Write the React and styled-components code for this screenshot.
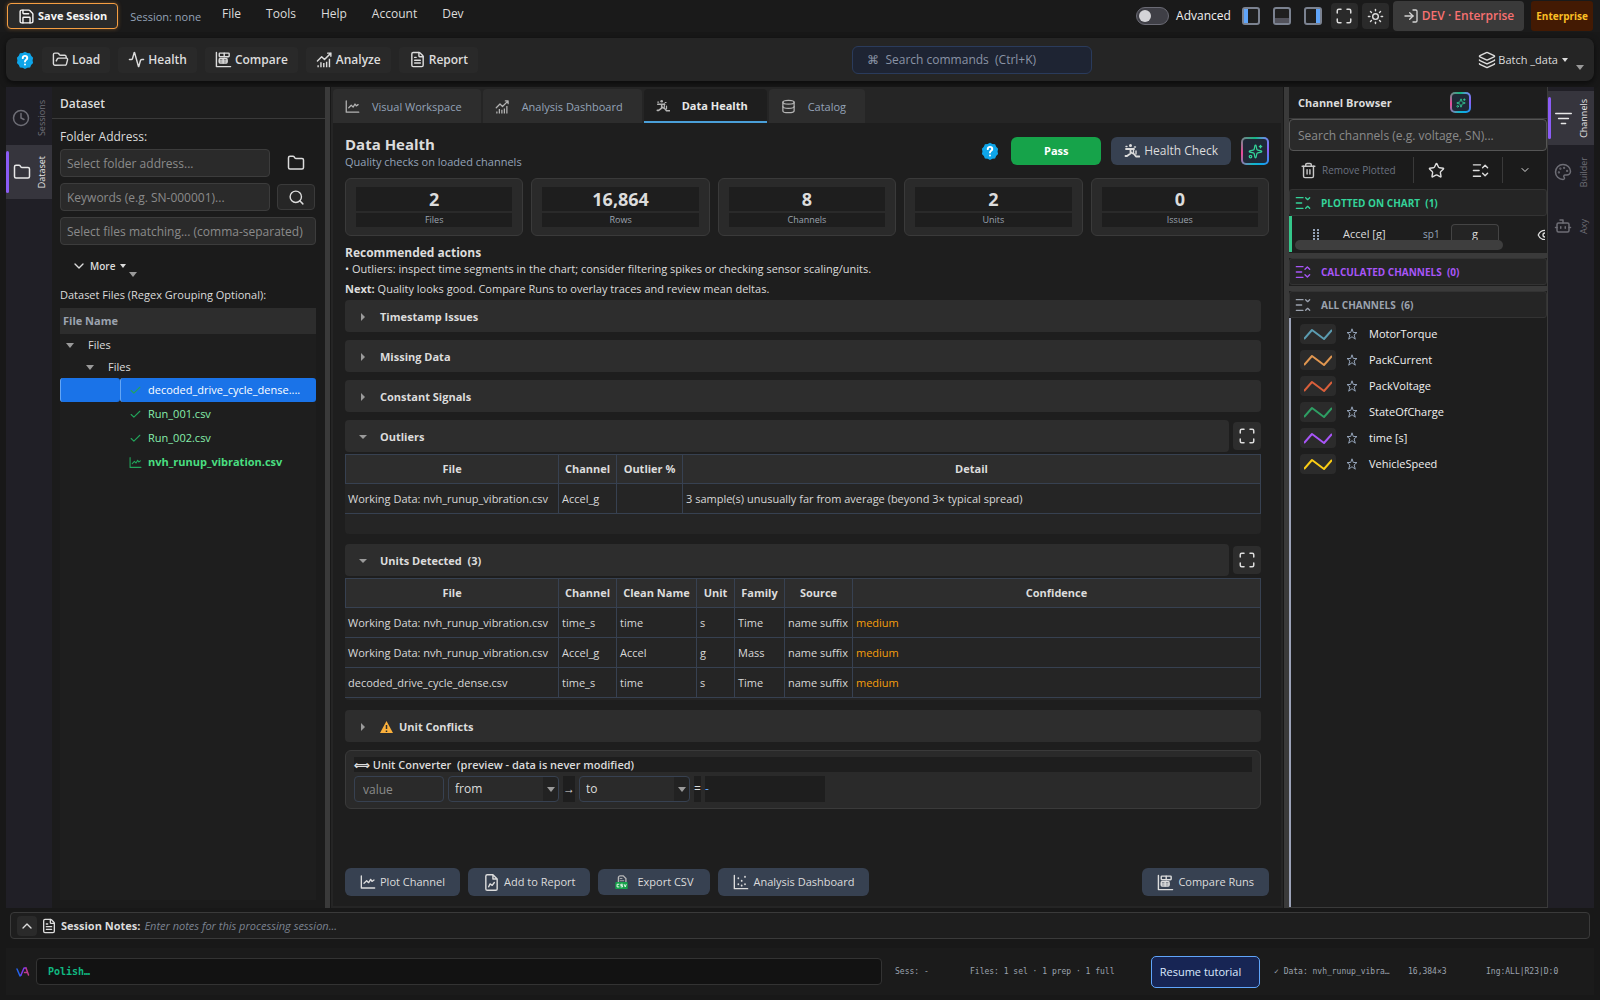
import { useState } from 'react'
import styled, { createGlobalStyle, css } from 'styled-components'
import {
  Activity, Bot, ChevronDown, ChevronUp, Check, Clock, Database, FileText, Folder, FolderOpen,
  Layers, LogIn, Maximize, Palette, Save, Search, Sparkles, Star, Sun, Trash2, Eye,
} from 'lucide-react'

const GlobalStyle = createGlobalStyle`
  * {
    box-sizing: border-box;
  }
  body {
    margin: 0;
    background: #181818;
    color: #dcdcdc;
    font-family: "Open Sans", "Noto Sans", sans-serif;
    font-size: 12px;
    line-height: 16px;
  }
  button, input, select {
    font: inherit;
    color: inherit;
    margin: 0;
  }
  button {
    border: 0;
    padding: 0;
    background: none;
    white-space: nowrap;
  }
  svg {
    flex: none;
    display: block;
  }
`

const Page = styled.div`
  min-height: 100vh;
  display: flex;
  flex-direction: column;
`

/* ---- top menu ---- */

const TopBar = styled.header`
  display: flex;
  align-items: center;
  height: 32px;
  padding: 0 7px;
  background: #1a1a1a;
`
const SaveButton = styled.button`
  display: flex;
  align-items: center;
  gap: 3px;
  height: 26px;
  padding: 0 10px;
  border: 1px solid #f59e42;
  border-radius: 4px;
  background: #2a2a2a;
  color: #f5f5f5;
  font-size: 11px;
  font-weight: 700;
  box-shadow: 0 0 4px rgba(245, 158, 66, 0.35);
`
const SessionLabel = styled.span`
  margin: 2px 21px 0 12px;
  color: #94a3b8;
  font-size: 11px;
`
const Menu = styled.nav`
  display: flex;
  gap: 25px;
  flex: 1;
  padding-bottom: 4px;
`
const TopRight = styled.div`
  display: flex;
  align-items: center;
`
const ToggleLabel = styled.label`
  display: flex;
  align-items: center;
  gap: 7px;
  margin-right: 11px;
  color: #f0f0f0;
`
const Toggle = styled.input`
  appearance: none;
  width: 33px;
  height: 18px;
  padding: 2px;
  border: 1px solid #6b6b75;
  border-radius: 9px;
  background: #3f3f46;
  &::before {
    content: "";
    display: block;
    width: 12px;
    height: 12px;
    border-radius: 50%;
    background: #d4d4d8;
  }
  &:checked::before {
    margin-left: 15px;
  }
`
const LayoutButtons = styled.div`
  display: flex;
  gap: 13px;
  margin-right: 9px;
`
const SquareButton = styled.button`
  display: grid;
  place-items: center;
  width: 27px;
  height: 26px;
  margin-right: 4px;
  border-radius: 4px;
  background: #2a2a2a;
`
const PlanButton = styled.button`
  display: flex;
  align-items: center;
  gap: 3px;
  height: 30px;
  margin-right: 7px;
  padding: 0 10px;
  border-radius: 4px;
  background: #3a3a3a;
  font-weight: 600;
  color: #f87171;
  svg {
    color: #d4d4d4;
  }
`
const PlanBadge = styled.span`
  padding: 7px 5px;
  border-radius: 3px;
  background: #431a03;
  color: #fbbf24;
  font-size: 10px;
  font-weight: 700;
`

/* ---- toolbar ---- */

const Toolbar = styled.div`
  display: flex;
  align-items: center;
  justify-content: space-between;
  height: 43px;
  margin: 6px;
  padding: 0 10px;
  border-radius: 8px;
  background: #252525;
  box-shadow: 0 2px 6px rgba(0, 0, 0, 0.6);
`
const ToolGroup = styled.div`
  display: flex;
  align-items: center;
  gap: 8px;
`
const ToolButton = styled.button`
  display: flex;
  align-items: center;
  gap: 3px;
  height: 26px;
  padding: 0 10px;
  border-radius: 4px;
  background: #292929;
  font-weight: 600;
`
const CommandBox = styled.input`
  width: 240px;
  height: 28px;
  margin-right: 12px;
  padding: 0 14px;
  border: 1px solid #2a3b5c;
  border-radius: 6px;
  background: #1e2433;
  &::placeholder {
    color: #8a93a5;
    opacity: 1;
  }
`
const BatchButton = styled.button`
  display: flex;
  align-items: center;
  gap: 2px;
  font-size: 11px;
`
const Caret = styled.span`
  width: 0;
  height: 0;
  border: 4px solid transparent;
  border-bottom: 0;
  border-top: 5px solid #9a9a9a;
`
const SmallCaret = styled(Caret)`
  border-width: 3px;
  border-bottom: 0;
  border-top: 4px solid #dcdcdc;
  margin-left: 2px;
`
const LowCaret = styled(Caret)`
  margin-top: 16px;
`

/* ---- workspace ---- */

const Workspace = styled.div`
  display: flex;
  flex: 1;
  margin: 0 6px;
`
const Rail = styled.nav`
  display: flex;
  flex-direction: column;
  width: 46px;
  flex: none;
  background: #201f26;
  padding-top: 4px;
`
const RailButton = styled.button`
  display: flex;
  align-items: center;
  justify-content: space-between;
  height: 54px;
  padding: 0 2px 0 6px;
  color: ${(props) => (props.$active ? '#e8e8e8' : '#6e6e76')};
  ${(props) => props.$active && css`
    padding-left: 3px;
    background: #36353d;
    &::before {
      content: "";
      width: 3px;
      height: 42px;
      margin-left: -3px;
      border-radius: 2px;
      background: #8b5cf6;
    }
  `}
  span {
    writing-mode: vertical-rl;
    transform: rotate(180deg);
    font-size: 9px;
  }
`
const Splitter = styled.div`
  width: 5px;
  flex: none;
  background: #3a3a3a;
`

/* ---- dataset panel ---- */

const DatasetPanel = styled.aside`
  display: flex;
  flex-direction: column;
  width: 273px;
  flex: none;
  background: #1b1b1b;
`
const PanelTitle = styled.h2`
  display: flex;
  align-items: center;
  height: 32px;
  margin: 0;
  padding: 2px 8px 0;
  border-bottom: 1px solid #3a3a3a;
  background: #1e1e1e;
  font-size: 12px;
  font-weight: 600;
`
const DatasetBody = styled.div`
  display: flex;
  flex-direction: column;
  flex: 1;
  padding: 10px 9px 8px 8px;
`
const FieldRow = styled.div`
  display: grid;
  grid-template-columns: 210px 38px;
  align-items: center;
  column-gap: 7px;
  margin-bottom: 6px;
`
const FieldLabel = styled.label`
  margin-bottom: 4px;
  font-size: ${(props) => (props.$small ? '11px' : '12px')};
`
const TextField = styled.input`
  width: 100%;
  height: 28px;
  padding: 0 6px;
  border: 1px solid #3c3c3c;
  border-radius: 4px;
  background: #2a2a2a;
  &::placeholder {
    color: #8a8a8a;
    opacity: 1;
  }
`
const FieldButton = styled.button`
  display: grid;
  place-items: center;
  height: 26px;
  border-radius: 4px;
  border: 1px solid ${(props) => (props.$plain ? 'transparent' : '#3a3a3a')};
  background: ${(props) => (props.$plain ? 'none' : '#262626')};
`
const MoreButton = styled.button`
  display: flex;
  align-items: center;
  align-self: flex-start;
  gap: 3px;
  height: 26px;
  margin: 8px 0 8px 11px;
  font-size: 10px;
  font-weight: 600;
`
const TreeHeader = styled.div`
  height: 26px;
  margin-top: 1px;
  padding: 5px 3px;
  background: #2d2d2d;
  color: #9ca3af;
  font-size: 11px;
  font-weight: 700;
`
const Tree = styled.div`
  flex: 1;
  background: #1e1e1e;
  font-size: 11px;
`
const FolderRow = styled.button`
  display: flex;
  align-items: center;
  gap: 14px;
  height: 22px;
  padding-left: ${(props) => (props.$depth ? '26px' : '6px')};
`
const FileRow = styled.button`
  display: flex;
  align-items: stretch;
  width: 100%;
  height: 24px;
  color: ${(props) => (props.$plotted ? '#4ade80' : '#86efac')};
  font-weight: ${(props) => (props.$plotted ? 700 : 400)};
  text-align: left;
  svg {
    color: #22a55b;
  }
  span {
    border-left: 1px solid transparent;
    border-radius: 3px;
  }
  ${(props) => props.$selected && css`
    color: #fff;
    span {
      border-left-color: #63a5f5;
      background: #1a73e8;
    }
  `}
`
const Indent = styled.span`
  width: 60px;
`
const FileName = styled.span`
  display: flex;
  align-items: center;
  gap: 6px;
  flex: 1;
  padding-left: 8px;
`

/* ---- center ---- */

const Center = styled.main`
  display: flex;
  flex-direction: column;
  flex: 1;
  min-width: 0;
  margin: 0 1px;
  background: #252525;
`
const TabBar = styled.div`
  display: flex;
  gap: 2px;
  height: 36px;
  padding: 2px 2px 0;
`
const Tab = styled.button`
  display: flex;
  align-items: center;
  gap: 12px;
  padding: 1px 19px 0 12px;
  border-radius: 4px 4px 0 0;
  background: #2d2d2d;
  color: #94a3b8;
  font-size: 11px;
  svg {
    color: #b4b4b4;
  }
  ${(props) => props.$active && css`
    border-bottom: 2px solid #4a9fd8;
    background: #1e1e1e;
    color: #e8e8e8;
    font-weight: 700;
  `}
`
const Content = styled.div`
  display: flex;
  flex-direction: column;
  flex: 1;
  margin: 0 2px;
  padding: 10px 12px;
  border-bottom: 2px solid #252525;
  background: #1e1e1e;
`
const HealthHeader = styled.div`
  display: flex;
  align-items: center;
  gap: 10px;
  margin-bottom: 9px;
`
const Heading = styled.div`
  flex: 1;
  h1 {
    margin: 0;
    font-size: 15px;
    line-height: 22px;
  }
  p {
    margin: 0;
    font-size: 11px;
    line-height: 14px;
    color: #94a3b8;
  }
`
const ActionButton = styled.button`
  display: flex;
  align-items: center;
  gap: 4px;
  height: 28px;
  padding: 0 15px;
  border-radius: 6px;
  background: #374151;
  color: #dcdcdc;
  font-size: 11px;
`
const CheckButton = styled(ActionButton)`
  padding: 0 13px;
  font-size: 12px;
`
const PassButton = styled(ActionButton)`
  justify-content: center;
  width: 90px;
  margin-left: 2px;
  background: #16a34a;
  color: #fff;
  font-weight: 700;
`
const AiButton = styled.button`
  display: grid;
  place-items: center;
  width: ${(props) => (props.$small ? '21px' : '28px')};
  height: ${(props) => (props.$small ? '21px' : '28px')};
  border: 2px solid transparent;
  border-radius: 5px;
  background:
    linear-gradient(#1f2937, #1f2937) padding-box,
    conic-gradient(from 0deg, #10b981, #6b8ae8 40deg, #8b5cf6 90deg, #0ea5e9 150deg, #14b8c6 190deg, #ec4899 260deg, #10b981) border-box;
  color: #34d399;
`
const Cards = styled.div`
  display: grid;
  grid-template-columns: repeat(5, 1fr);
  gap: 8px;
`
const Card = styled.div`
  display: grid;
  gap: 2px;
  padding: 8px 10px;
  border: 1px solid #3a3a3a;
  border-radius: 6px;
  background: #2a2a2a;
  text-align: center;
  strong {
    background: #1e1e1e;
    font-size: 18px;
    line-height: 24px;
  }
  span {
    background: #1e1e1e;
    color: #9ca3af;
    font-size: 9px;
    line-height: 14px;
  }
`
const Advice = styled.div`
  margin: 9px 0 3px;
  font-size: 11px;
  p {
    margin: 0;
  }
  p:first-child {
    font-size: 12px;
  }
  p:last-child {
    margin-top: 4px;
  }
`
const Sections = styled.div`
  display: flex;
  flex-direction: column;
  gap: 8px;
  margin-right: 8px;
`
const SectionHead = styled.div`
  display: flex;
  align-items: center;
  gap: 4px;
`
const SectionToggle = styled.button`
  display: flex;
  align-items: center;
  flex: 1;
  height: 32px;
  padding: 1px 0 0 14px;
  border-radius: 4px;
  background: #2d2d2d;
  font-size: 11px;
  font-weight: 700;
  white-space: pre;
  svg {
    margin-right: 6px;
  }
`
const Disclosure = styled.span`
  width: 21px;
  &::before {
    content: "";
    display: block;
    width: 0;
    height: 0;
    border: 4px solid transparent;
    ${(props) => (props.$open
      ? 'border-top: 4px solid #9a9a9a; border-bottom: 0;'
      : 'border-left: 4px solid #9a9a9a; border-right: 0; margin-left: 2px;')}
  }
`
const ExpandButton = styled(SquareButton)`
  width: 28px;
  height: 28px;
  margin: 0;
  background: #2d2d2d;
`
const TableBox = styled.div`
  margin: 2px 0;
  padding-bottom: ${(props) => (props.$roomy ? '20px' : '2px')};
  border-radius: 0 0 4px 4px;
  background: #252525;
`
const Table = styled.table`
  width: 100%;
  table-layout: fixed;
  border-collapse: collapse;
  font-size: 11px;
  th, td {
    height: 30px;
    padding: 0 3px;
    border: 1px solid #374151;
    white-space: nowrap;
  }
  th {
    height: 29px;
    background: #2d2d2d;
    font-weight: 700;
  }
  td {
    color: #d8d8d8;
  }
  td:first-child {
    padding-left: 2px;
    border-left-color: #252525;
  }
`
const Medium = styled.td`
  && {
    color: #f59e0b;
  }
`
const Converter = styled.section`
  padding: 6px 8px;
  border: 1px solid #3a3a3a;
  border-radius: 6px;
  background: #2a2a2a;
  h3 {
    margin: 0 0 4px;
    background: #1e1e1e;
    font-size: 11px;
    font-weight: 600;
    line-height: 15px;
  }
`
const ConverterRow = styled.div`
  display: flex;
  gap: 4px;
`
const ValueInput = styled(TextField)`
  width: 90px;
  height: 26px;
  padding: 0 8px;
  border-color: #374151;
`
const SelectWrap = styled.div`
  display: grid;
  width: 111px;
  align-items: center;
  > * {
    grid-area: 1 / 1;
  }
  ${Caret} {
    justify-self: end;
    margin-right: 4px;
    pointer-events: none;
  }
`
const Select = styled.select`
  appearance: none;
  width: 100%;
  height: 26px;
  padding: 0 6px;
  border: 1px solid #374151;
  border-radius: 4px;
  background: linear-gradient(90deg, transparent 94px, #222 94px);
`
const Sign = styled.span`
  padding: 5px 0;
  background: #1e1e1e;
  width: ${(props) => (props.$wide ? '120px' : 'auto')};
  color: ${(props) => (props.$wide ? '#60a5fa' : 'inherit')};
`
const Footer = styled.div`
  display: flex;
  align-items: center;
  gap: 8px;
  margin-top: auto;
  ${ActionButton}:last-child {
    margin-left: auto;
  }
`
const ExportButton = styled(ActionButton)`
  gap: 9px;
  height: 26px;
  padding: 0 17px;
`

/* ---- channel browser ---- */

const ChannelPanel = styled.aside`
  display: flex;
  flex-direction: column;
  width: 259px;
  flex: none;
  border-right: 1px solid #3a3a3a;
  border-bottom: 1px solid #3a3a3a;
  background: #1e1e1e;
`
const ChannelTitle = styled(PanelTitle)`
  justify-content: space-between;
  padding: 0 76px 0 9px;
  font-size: 11px;
  font-weight: 700;
`
const ChannelSearch = styled(TextField)`
  height: 32px;
  padding: 0 8px;
  border-color: #555;
`
const ChannelTools = styled.div`
  display: flex;
  align-items: center;
  height: 38px;
  padding-left: 11px;
  background: #1b1b1b;
`
const RemoveButton = styled.button`
  display: flex;
  align-items: center;
  gap: 5px;
  width: 113px;
  color: #6b7280;
  font-size: 10px;
  svg {
    color: #c8c8c8;
  }
`
const Divider = styled.span`
  width: 1px;
  height: 26px;
  background: #3a3a3a;
`
const ToolIcon = styled.button`
  display: grid;
  place-items: center;
  flex: 1;
`
const GroupHead = styled.button`
  display: flex;
  align-items: center;
  gap: 10px;
  height: 27px;
  padding-left: 5px;
  border: 1px solid #333;
  border-radius: 3px;
  background: #252525;
  color: ${(props) => props.$color};
  font-size: 10px;
  font-weight: 700;
  white-space: pre;
`
const PlottedArea = styled.div`
  height: 36px;
  padding-left: 3px;
  border-left: 3px solid #34c78a;
`
const PlottedRow = styled.div`
  display: flex;
  align-items: flex-end;
  height: 24px;
  padding-left: 18px;
  margin-right: 2px;
  overflow: hidden;
  line-height: 12px;
  > * {
    flex: none;
  }
  svg:last-child {
    margin-bottom: -3px;
  }
`
const PlottedName = styled.span`
  width: 80px;
  margin-left: 23px;
  font-size: 11px;
`
const PlottedSlot = styled.span`
  width: 28px;
  color: #94a3b8;
  font-size: 10px;
`
const UnitButton = styled.button`
  width: 48px;
  margin-right: 38px;
  padding-top: 3px;
  border: 1px solid #444;
  border-bottom: 0;
  border-radius: 4px 4px 0 0;
  background: #242424;
  font-size: 11px;
`
const ScrollThumb = styled.div`
  width: 208px;
  height: 10px;
  border-radius: 5px;
  background: #3e3e3e;
`
const Bar = styled.div`
  height: 5px;
  margin-top: 1px;
  background: #3a3a3a;
`
const ChannelList = styled.ul`
  flex: 1;
  margin: 0;
  padding: 3px 0 0 9px;
  border-left: 2px solid #9ca3b8;
  list-style: none;
`
const ChannelRow = styled.li`
  display: flex;
  align-items: center;
  height: 26px;
  color: #f0f0f0;
  font-size: 11px;
`
const Swatch = styled.button`
  display: grid;
  place-items: center;
  width: 36px;
  height: 20px;
  margin-right: 10px;
  border-radius: 4px;
  background: #2b2b2b;
  color: ${(props) => props.$color};
`
const StarButton = styled.button`
  margin-right: 11px;
  color: #94a3b8;
`

/* ---- bottom ---- */

const Notes = styled.div`
  display: flex;
  align-items: center;
  height: 27px;
  margin: 4px 10px 9px;
  padding: 0 6px;
  border: 1px solid #3a3a3a;
  border-radius: 4px;
  background: #1e1e1e;
`
const NotesToggle = styled(SquareButton)`
  width: 20px;
  height: 20px;
  margin-right: 4px;
`
const NotesLabel = styled.label`
  display: flex;
  align-items: center;
  gap: 4px;
  font-size: 11px;
  font-weight: 700;
`
const NotesInput = styled.input`
  flex: 1;
  margin-left: 4px;
  padding: 0;
  border: 0;
  background: none;
  font-size: 11px;
  font-style: italic;
  &::placeholder {
    color: #7b8290;
    opacity: 1;
  }
`
const StatusBar = styled.footer`
  display: flex;
  align-items: center;
  height: 47px;
  margin: 0 6px 5px;
  padding: 0 32px 0 10px;
  background: #1b1b1b;
  color: #9ca3af;
  font-family: "DejaVu Sans Mono", monospace;
  font-size: 8px;
`
const Console = styled.input`
  flex: 1;
  height: 27px;
  margin: 0 13px 0 6px;
  padding: 0 11px;
  border: 1px solid #333;
  border-radius: 4px;
  background: #121212;
  color: #10b981;
  font-size: 10px;
  font-weight: 700;
`
const StatusItem = styled.span`
  width: ${(props) => props.$width};
  flex: none;
  white-space: pre;
`
const ResumeButton = styled.button`
  width: 109px;
  height: 32px;
  margin-right: 14px;
  padding-right: 10px;
  border: 1px solid #60a5fa;
  border-radius: 5px;
  background: #172554;
  color: #dbeafe;
  font-family: "Open Sans", "Noto Sans", sans-serif;
  font-size: 11px;
`

/* ---- icons ---- */

const Icon = ({ size = 16, children, ...rest }) => (
  <svg width={size} height={size} viewBox="0 0 24 24" fill="none" stroke="currentColor" strokeWidth="2" strokeLinecap="round" strokeLinejoin="round" aria-hidden="true" {...rest}>
    {children}
  </svg>
)

const HelpIcon = () => (
  <Icon size={18} stroke="none">
    <path fill="#0ea5e9" d="M12 1l3.2 1.8 3.6.3 1.5 3.3 2.5 2.6-.7 3.6.7 3.5-2.6 2.5-1.4 3.4-3.6.3L12 24l-3.2-1.7-3.6-.3-1.4-3.4L1.200 16l.7-3.500L1.200 9l2.500-2.600 1.500-3.300 3.600-.3z" />
    <path stroke="#fff" strokeWidth="2.600" d="M9 9.500a3 3 0 0 1 6 0c0 2-3 2.300-3 4.500M12 17.800v.2" />
  </Icon>
)
const LineChartIcon = ({ size = 16 }) => (
  <Icon size={size}>
    <path d="M2 3v18h20" />
    <path d="M6 14l4-4 3 3 3-5 2 3 3-2" />
  </Icon>
)
const BarsTrendIcon = ({ size = 17 }) => (
  <Icon size={size}>
    <path d="M2 14l6-6 4 4 9-9M16.500 3H21v4.500" />
    <path d="M3 20v3M7 16v7M11 17v6M15 15v8M19 11v12" strokeWidth="2" strokeLinecap="butt" />
  </Icon>
)
const CompareIcon = () => (
  <Icon size={17}>
    <path d="M2 2v20h20" />
    <rect x="6" y="3" width="14" height="5" rx="1" />
    <path d="M13 3v5" />
    <rect x="6" y="11" width="11" height="6" rx="1" />
    <path d="M11.500 11v6M6 14h11" />
  </Icon>
)
const RunnerIcon = ({ size = 16 }) => (
  <svg width={size} height={size} viewBox="0 0 16 16" fill="none" stroke="currentColor" strokeLinecap="round" strokeLinejoin="round" aria-hidden="true">
    <circle cx="6.500" cy="2.500" r="1.500" fill="currentColor" stroke="none" />
    <path d="M2 6h8M6.500 6v4.500L3 13H1.500" strokeWidth="1.800" />
    <path d="M7 9.500l3 1.500 2 2.500h3.500" strokeWidth="1.800" />
    <path d="M9.500 5.500v4M12 8v3M2 3.500h1M10.500 4h1" strokeWidth="1.400" />
  </svg>
)
const ScatterIcon = () => (
  <Icon>
    <path d="M2 2v20h20" />
    <path d="M8 6v.5M13 10v.5M8 15v.5M18 4v.5M18 15v.5M13 17v.5" strokeWidth="2.600" />
  </Icon>
)
const ReportChartIcon = () => (
  <Icon size={17}>
    <path d="M14 1H6a2 2 0 0 0-2 2v18a2 2 0 0 0 2 2h12a2 2 0 0 0 2-2V7zM14 1v6h6" />
    <path d="M8 18l2-4 3 2 3-4" />
  </Icon>
)
const CsvIcon = () => (
  <svg width="13" height="15" viewBox="0 0 14 17" aria-hidden="true">
    <path d="M3.500 9V3a2 2 0 0 1 2-2H9l3 3v5" fill="none" stroke="#b8b8b8" strokeWidth="1.500" />
    <path d="M5 4h3M5 6.500h5" stroke="#b8b8b8" />
    <rect y="8" width="14" height="8" rx="1" fill="#16a34a" />
    <path d="M4.500 10.500H2v3h2.500M8.500 10.500H6.200v1.500h2v1.500H6M10 10.500l1.200 3 1.200-3" fill="none" stroke="#fff" />
  </svg>
)
const ListIcon = ({ size = 17, open }) => (
  <Icon size={size}>
    <path d="M2 4h10M2 12h8M2 20h10" />
    {open ? <path d="M16 4l3 3 3-3M16 20l3-3 3 3" /> : <path d="M15 8l3.500-3.500L22 8M15 16l3.500 3.500L22 16" />}
  </Icon>
)
const FilterLinesIcon = () => (
  <Icon size={17}>
    <path d="M1 5h22M5 12h14M9 19h6" />
  </Icon>
)
const GripIcon = () => (
  <svg width="7" height="11" viewBox="0 0 7 11" fill="#94a3b8" aria-hidden="true">
    {[0, 3, 6, 9].map((y) => (
      <g key={y}>
        <rect x="0" y={y} width="2" height="2" />
        <rect x="4" y={y} width="2" height="2" />
      </g>
    ))}
  </svg>
)
const WaveIcon = () => (
  <svg width="28" height="12" viewBox="0 0 28 12" fill="none" stroke="currentColor" strokeWidth="2" strokeLinejoin="round" aria-hidden="true">
    <path d="M0 11l8-9 12 9 8-9" />
  </svg>
)
const SmallStar = () => (
  <svg width="12" height="12" viewBox="0 0 12 12" fill="none" stroke="currentColor" aria-hidden="true">
    <path d="M6 .8l1.300 3.700H11L8.100 6.900l1.200 4.300L6 8.700l-3.300 2.500 1.200-4.300L1 4.500h3.700z" />
  </svg>
)
const LogoIcon = () => (
  <svg width="14" height="12" viewBox="0 0 14 12" fill="none" strokeWidth="1.500" strokeLinecap="round" strokeLinejoin="round" aria-hidden="true">
    <path d="M1 3l3 7 1-1" stroke="#2563eb" />
    <path d="M5 9l3-7h2" stroke="#7c3aed" />
    <path d="M10 2l2.500 7M8.500 6.500h3" stroke="#c0398f" />
  </svg>
)
const WarningIcon = () => (
  <svg width="13" height="12" viewBox="0 0 13 12" aria-hidden="true">
    <path d="M6.500 0L13 12H0z" fill="#fbb03b" />
    <path d="M6.500 4v4M6.500 9.500V11" stroke="#2d2d2d" strokeWidth="1.500" />
  </svg>
)
const PaneIcon = ({ side }) => (
  <svg width="18" height="18" viewBox="0 0 18 18" aria-hidden="true">
    <rect x="1" y="1" width="16" height="16" rx="2" fill="#1f1f1f" stroke="#7b8290" strokeWidth="2" />
    {side === 'left' && <rect x="2" y="2" width="4" height="14" fill="#60a5fa" />}
    {side === 'right' && <rect x="12" y="2" width="4" height="14" fill="#60a5fa" />}
    {side === 'bottom' && <rect x="2" y="11" width="14" height="5" fill="#52525b" />}
  </svg>
)

/* ---- data ---- */

const menus = ['File', 'Tools', 'Help', 'Account', 'Dev']

const tools = [
  { label: 'Load', icon: <FolderOpen size={17} /> },
  { label: 'Health', icon: <Activity size={17} /> },
  { label: 'Compare', icon: <CompareIcon /> },
  { label: 'Analyze', icon: <BarsTrendIcon /> },
  { label: 'Report', icon: <FileText size={17} /> },
]

const tabs = [
  { label: 'Visual Workspace', icon: <LineChartIcon size={15} /> },
  { label: 'Analysis Dashboard', icon: <BarsTrendIcon size={15} /> },
  { label: 'Data Health', icon: <RunnerIcon size={14} /> },
  { label: 'Catalog', icon: <Database size={15} /> },
]

const stats = [
  ['2', 'Files'],
  ['16,864', 'Rows'],
  ['8', 'Channels'],
  ['2', 'Units'],
  ['0', 'Issues'],
]

const files = [
  { name: 'decoded_drive_cycle_dense....' },
  { name: 'Run_001.csv' },
  { name: 'Run_002.csv' },
  { name: 'nvh_runup_vibration.csv', plotted: true },
]

const units = [
  ['Working Data: nvh_runup_vibration.csv', 'time_s', 'time', 's', 'Time', 'name suffix'],
  ['Working Data: nvh_runup_vibration.csv', 'Accel_g', 'Accel', 'g', 'Mass', 'name suffix'],
  ['decoded_drive_cycle_dense.csv', 'time_s', 'time', 's', 'Time', 'name suffix'],
]

const channels = [
  { name: 'MotorTorque', color: '#5b9bb0' },
  { name: 'PackCurrent', color: '#e09650' },
  { name: 'PackVoltage', color: '#d95f3b' },
  { name: 'StateOfCharge', color: '#2e9e63' },
  { name: 'time [s]', color: '#a855f7' },
  { name: 'VehicleSpeed', color: '#facc15' },
]

const Section = ({ title, open, icon, expandable, children }) => (
  <section>
    <SectionHead>
      <SectionToggle aria-expanded={!!open}>
        <Disclosure $open={open} />
        {icon}
        {title}
      </SectionToggle>
      {expandable && (
        <ExpandButton aria-label={`Expand ${title}`}>
          <Maximize size={18} />
        </ExpandButton>
      )}
    </SectionHead>
    {children}
  </section>
)

const App = () => {
  const [tab, setTab] = useState('Data Health')
  const [selected, setSelected] = useState(files[0].name)
  const [log, setLog] = useState('Polish…')

  return (
    <Page>
      <GlobalStyle />
      <TopBar>
        <SaveButton><Save size={17} />Save Session</SaveButton>
        <SessionLabel>Session: none</SessionLabel>
        <Menu>
          {menus.map((m) => <button key={m}>{m}</button>)}
        </Menu>
        <TopRight>
          <ToggleLabel>
            <Toggle type="checkbox" />
            Advanced
          </ToggleLabel>
          <LayoutButtons>
            <button aria-label="Left pane"><PaneIcon side="left" /></button>
            <button aria-label="Bottom pane"><PaneIcon side="bottom" /></button>
            <button aria-label="Right pane"><PaneIcon side="right" /></button>
          </LayoutButtons>
          <SquareButton aria-label="Full screen"><Maximize size={18} /></SquareButton>
          <SquareButton aria-label="Theme"><Sun size={17} /></SquareButton>
          <PlanButton><LogIn size={16} />DEV · Enterprise</PlanButton>
          <PlanBadge>Enterprise</PlanBadge>
        </TopRight>
      </TopBar>

      <Toolbar>
        <ToolGroup>
          <button aria-label="Help"><HelpIcon /></button>
          {tools.map((t) => <ToolButton key={t.label}>{t.icon}{t.label}</ToolButton>)}
        </ToolGroup>
        <CommandBox placeholder="⌘  Search commands  (Ctrl+K)" aria-label="Search commands" />
        <ToolGroup>
          <BatchButton><Layers size={18} />Batch _data<SmallCaret /></BatchButton>
          <LowCaret />
        </ToolGroup>
      </Toolbar>

      <Workspace>
        <Rail>
          <RailButton><Clock size={18} /><span>Sessions</span></RailButton>
          <RailButton $active><Folder size={18} /><span>Dataset</span></RailButton>
        </Rail>
        <DatasetPanel>
          <PanelTitle>Dataset</PanelTitle>
          <DatasetBody>
            <FieldLabel htmlFor="folder">Folder Address:</FieldLabel>
            <FieldRow>
              <TextField id="folder" placeholder="Select folder address..." />
              <FieldButton $plain aria-label="Browse"><Folder size={18} /></FieldButton>
            </FieldRow>
            <FieldRow>
              <TextField placeholder="Keywords (e.g. SN-000001)..." aria-label="Keywords" />
              <FieldButton aria-label="Search"><Search size={17} /></FieldButton>
            </FieldRow>
            <TextField placeholder="Select files matching... (comma-separated)" aria-label="Select files matching" />
            <MoreButton><ChevronDown size={16} />More<SmallCaret /><LowCaret /></MoreButton>
            <FieldLabel as="span" $small>Dataset Files (Regex Grouping Optional):</FieldLabel>
            <TreeHeader>File Name</TreeHeader>
            <Tree>
              <FolderRow><Caret />Files</FolderRow>
              <FolderRow $depth><Caret />Files</FolderRow>
              {files.map((f) => (
                <FileRow key={f.name} $plotted={f.plotted} $selected={f.name === selected} onClick={() => setSelected(f.name)}>
                  <Indent />
                  <FileName>
                    {f.plotted ? <LineChartIcon size={13} /> : <Check size={13} />}
                    {f.name}
                  </FileName>
                </FileRow>
              ))}
            </Tree>
          </DatasetBody>
        </DatasetPanel>
        <Splitter />

        <Center>
          <TabBar>
            {tabs.map((t) => (
              <Tab key={t.label} $active={t.label === tab} onClick={() => setTab(t.label)}>
                {t.icon}
                {t.label}
              </Tab>
            ))}
          </TabBar>
          <Content>
            <HealthHeader>
              <Heading>
                <h1>Data Health</h1>
                <p>Quality checks on loaded channels</p>
              </Heading>
              <button aria-label="Help"><HelpIcon /></button>
              <PassButton>Pass</PassButton>
              <CheckButton><RunnerIcon />Health Check</CheckButton>
              <AiButton aria-label="Ask AI"><Sparkles size={15} /></AiButton>
            </HealthHeader>
            <Cards>
              {stats.map(([value, label]) => (
                <Card key={label}>
                  <strong>{value}</strong>
                  <span>{label}</span>
                </Card>
              ))}
            </Cards>
            <Advice>
              <p><b>Recommended actions</b></p>
              <p>• Outliers: inspect time segments in the chart; consider filtering spikes or checking sensor scaling/units.</p>
              <p><b>Next:</b> Quality looks good. Compare Runs to overlay traces and review mean deltas.</p>
            </Advice>
            <Sections>
              <Section title="Timestamp Issues" />
              <Section title="Missing Data" />
              <Section title="Constant Signals" />
              <Section title="Outliers" open expandable>
                <TableBox $roomy>
                  <Table>
                    <colgroup>
                      <col width="213" /><col width="58" /><col width="66" /><col />
                    </colgroup>
                    <thead>
                      <tr><th>File</th><th>Channel</th><th>Outlier %</th><th>Detail</th></tr>
                    </thead>
                    <tbody>
                      <tr>
                        <td>Working Data: nvh_runup_vibration.csv</td>
                        <td>Accel_g</td>
                        <td />
                        <td>3 sample(s) unusually far from average (beyond 3× typical spread)</td>
                      </tr>
                    </tbody>
                  </Table>
                </TableBox>
              </Section>
              <Section title="Units Detected  (3)" open expandable>
                <TableBox>
                  <Table>
                    <colgroup>
                      <col width="213" /><col width="58" /><col width="80" /><col width="38" />
                      <col width="50" /><col width="68" /><col />
                    </colgroup>
                    <thead>
                      <tr>
                        <th>File</th><th>Channel</th><th>Clean Name</th><th>Unit</th>
                        <th>Family</th><th>Source</th><th>Confidence</th>
                      </tr>
                    </thead>
                    <tbody>
                      {units.map((row, i) => (
                        <tr key={i}>
                          {row.map((cell, j) => <td key={j}>{cell}</td>)}
                          <Medium>medium</Medium>
                        </tr>
                      ))}
                    </tbody>
                  </Table>
                </TableBox>
              </Section>
              <Section title="Unit Conflicts" icon={<WarningIcon />} />
              <Converter>
                <h3>⟺ Unit Converter &nbsp;(preview - data is never modified)</h3>
                <ConverterRow>
                  <ValueInput placeholder="value" aria-label="Value" />
                  <SelectWrap>
                    <Select aria-label="From unit"><option>from</option></Select>
                    <Caret />
                  </SelectWrap>
                  <Sign>→</Sign>
                  <SelectWrap>
                    <Select aria-label="To unit"><option>to</option></Select>
                    <Caret />
                  </SelectWrap>
                  <Sign>=</Sign>
                  <Sign $wide>-</Sign>
                </ConverterRow>
              </Converter>
            </Sections>
            <Footer>
              <ActionButton><LineChartIcon />Plot Channel</ActionButton>
              <ActionButton><ReportChartIcon />Add to Report</ActionButton>
              <ExportButton><CsvIcon />Export CSV</ExportButton>
              <ActionButton><ScatterIcon />Analysis Dashboard</ActionButton>
              <ActionButton><CompareIcon />Compare Runs</ActionButton>
            </Footer>
          </Content>
        </Center>
        <Splitter />

        <ChannelPanel>
          <ChannelTitle>
            Channel Browser
            <AiButton $small aria-label="Ask AI"><Sparkles size={10} /></AiButton>
          </ChannelTitle>
          <ChannelSearch placeholder="Search channels (e.g. voltage, SN)..." aria-label="Search channels" />
          <ChannelTools>
            <RemoveButton><Trash2 size={17} />Remove Plotted</RemoveButton>
            <Divider />
            <ToolIcon aria-label="Favorites"><Star size={17} /></ToolIcon>
            <ToolIcon aria-label="Expand groups"><ListIcon /></ToolIcon>
            <Divider />
            <ToolIcon aria-label="More"><ChevronDown size={12} /></ToolIcon>
          </ChannelTools>
          <GroupHead $color="#34d399"><ListIcon size={16} open />{'PLOTTED ON CHART  (1)'}</GroupHead>
          <PlottedArea>
            <PlottedRow>
              <GripIcon />
              <PlottedName>Accel [g]</PlottedName>
              <PlottedSlot>sp1</PlottedSlot>
              <UnitButton>g</UnitButton>
              <Eye size={16} />
            </PlottedRow>
            <ScrollThumb />
          </PlottedArea>
          <Bar />
          <GroupHead $color="#a855f7"><ListIcon size={16} />{'CALCULATED CHANNELS  (0)'}</GroupHead>
          <Bar />
          <GroupHead $color="#9ca3af"><ListIcon size={16} open />{'ALL CHANNELS  (6)'}</GroupHead>
          <ChannelList>
            {channels.map((c) => (
              <ChannelRow key={c.name}>
                <Swatch $color={c.color} aria-label={`${c.name} color`}><WaveIcon /></Swatch>
                <StarButton aria-label={`Favorite ${c.name}`}><SmallStar /></StarButton>
                {c.name}
              </ChannelRow>
            ))}
          </ChannelList>
        </ChannelPanel>
        <Rail>
          <RailButton $active><FilterLinesIcon /><span>Channels</span></RailButton>
          <RailButton><Palette size={18} /><span>Builder</span></RailButton>
          <RailButton><Bot size={18} /><span>Axy</span></RailButton>
        </Rail>
      </Workspace>

      <Notes>
        <NotesToggle aria-label="Expand notes"><ChevronUp size={16} /></NotesToggle>
        <NotesLabel htmlFor="notes"><FileText size={16} />Session Notes:</NotesLabel>
        <NotesInput id="notes" placeholder="Enter notes for this processing session..." />
      </Notes>
      <StatusBar>
        <LogoIcon />
        <Console value={log} onChange={(e) => setLog(e.target.value)} aria-label="Console" />
        <StatusItem $width="75px">Sess: -</StatusItem>
        <StatusItem $width="181px">Files: 1 sel · 1 prep · 1 full</StatusItem>
        <ResumeButton>Resume tutorial</ResumeButton>
        <StatusItem $width="134px">✓ Data: nvh_runup_vibra…</StatusItem>
        <StatusItem $width="78px">16,384×3</StatusItem>
        <StatusItem $width="76px">Ing:ALL|R23|D:0</StatusItem>
      </StatusBar>
    </Page>
  )
}

export default App
